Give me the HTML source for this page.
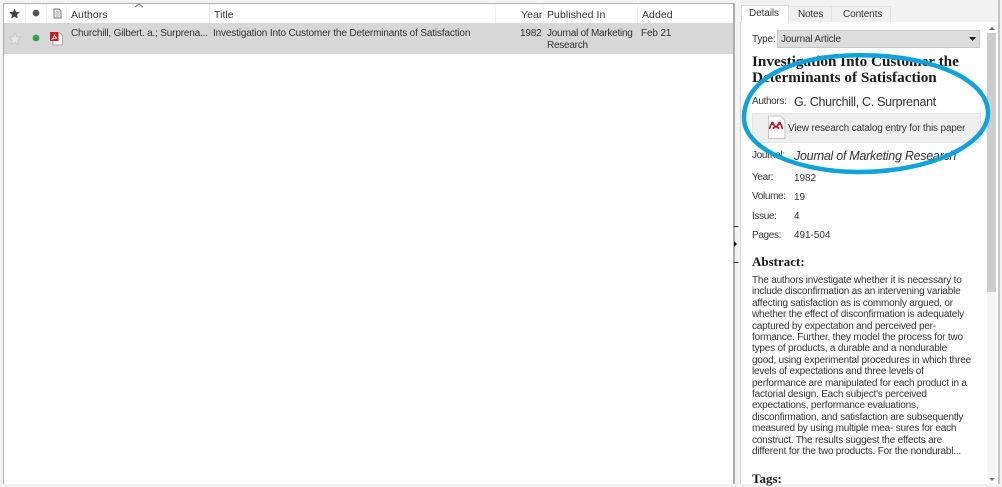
<!DOCTYPE html>
<html><head><meta charset="utf-8">
<style>
html,body{margin:0;padding:0}
body{width:1002px;height:484px;position:relative;overflow:hidden;background:#f2f2f2;font-family:"Liberation Sans",sans-serif;color:#222;font-size:10px}
#w{position:absolute;left:0;top:0;width:1002px;height:484px;filter:blur(.3px)}
.a{position:absolute;white-space:nowrap}
.h{font-size:10.5px;color:#333;top:9px;letter-spacing:.05px}
.c{font-size:10px;color:#333;line-height:11.5px;letter-spacing:-.17px}
.l{left:752px;font-size:10px;color:#333;letter-spacing:-.35px}
.v{left:794px;font-size:10px;color:#333;letter-spacing:-.05px}
</style></head><body><div id="w">
<!-- left list panel -->
<div class="a" style="left:3px;top:3px;width:732px;height:481px;background:#fff;border-left:1px solid #adadad;border-top:1px solid #b4b4b4;border-right:2px solid #adadad;box-sizing:border-box"></div>
<div class="a" style="left:4px;top:23px;width:729px;height:31px;background:#d7d7d7"></div>
<!-- header separators -->
<div class="a" style="left:25px;top:4px;width:1px;height:19px;background:#f0f0f0"></div>
<div class="a" style="left:46px;top:4px;width:1px;height:19px;background:#f0f0f0"></div>
<div class="a" style="left:66px;top:4px;width:1px;height:19px;background:#f0f0f0"></div>
<div class="a" style="left:209px;top:4px;width:1px;height:19px;background:#ececec"></div>
<div class="a" style="left:495px;top:4px;width:1px;height:19px;background:#f0f0f0"></div>
<div class="a" style="left:543px;top:4px;width:1px;height:19px;background:#f0f0f0"></div>
<div class="a" style="left:637px;top:4px;width:1px;height:19px;background:#f0f0f0"></div>
<!-- header icons -->
<svg class="a" style="left:0;top:0" width="150" height="54" viewBox="0 0 150 54">
<path d="M14.500 8.500l1.500 3.400 3.800.4-2.800 2.500.8 3.700-3.300-1.900-3.300 1.900.8-3.700-2.800-2.500 3.800-.4z" fill="#444"/>
<circle cx="36" cy="13" r="3.400" fill="#555"/>
<path d="M54 9h5l2 2v7h-7z" fill="#f4f4f4" stroke="#777" stroke-width="1"/>
<path d="M55.500 12h4M55.500 14h4M55.500 16h4" stroke="#888" stroke-width=".8"/>
<path d="M15 33l1.800 3.800 4.200.5-3.100 2.900.8 4.200-3.700-2.100-3.700 2.100.8-4.200-3.100-2.900 4.200-.5z" fill="#e4e4e4" stroke="#c8c8c8" stroke-width="1"/>
<circle cx="36" cy="38" r="3.400" fill="#2fa344"/>
<path d="M53 33h7l2.500 2.500v9.500h-9.500z" fill="#fff" stroke="#9a9a9a" stroke-width=".8"/>
<rect x="50" y="32" width="8.500" height="9" fill="#cc1c22"/>
<path d="M51.500 39.500q2.500-1.500 3-5q.5 3 2.500 3.500q-3 0-5.500 1.500z" fill="none" stroke="#fff" stroke-width=".8"/>
<path d="M135 7l4-3 4 3" fill="none" stroke="#777" stroke-width="1"/>
</svg>
<div class="a h" style="left:71px">Authors</div>
<div class="a h" style="left:214px">Title</div>
<div class="a h" style="left:521px">Year</div>
<div class="a h" style="left:547px">Published In</div>
<div class="a h" style="left:642px">Added</div>
<div class="a c" style="left:71px;top:28px">Churchill, Gilbert. a.; Surprena...</div>
<div class="a c" style="left:213px;top:28px;letter-spacing:-.15px">Investigation Into Customer the Determinants of Satisfaction</div>
<div class="a c" style="left:520px;top:28px">1982</div>
<div class="a c" style="left:547px;top:28px;letter-spacing:-.25px">Journal of Marketing<br>Research</div>
<div class="a c" style="left:641px;top:28px">Feb 21</div>
<!-- splitter -->
<div class="a" style="left:735px;top:0;width:5px;height:484px;background:#f4f4f4"></div>
<svg class="a" style="left:732px;top:220px" width="10" height="50"><path d="M1.500 6.500H6.500M1.500 42.500H6.500" stroke="#333" stroke-width="1"/><path d="M2 21l3 3-3 3z" fill="#111"/></svg>
<!-- right panel -->
<div class="a" style="left:740px;top:22px;width:258px;height:462px;background:#fff;border-left:1px solid #d4d4d4;box-sizing:border-box"></div>
<div class="a" style="left:998px;top:0;width:2px;height:484px;background:#c6c6c6"></div>
<div class="a" style="left:741px;top:5px;width:48px;height:18px;background:#fff;border:1px solid #dcdcdc;border-bottom:0;box-sizing:border-box"></div>
<div class="a" style="left:789px;top:6px;width:43px;height:16px;background:#f0f0f0;border:1px solid #e2e2e2;border-bottom:0;border-left:0;box-sizing:border-box"></div>
<div class="a" style="left:832px;top:6px;width:59px;height:16px;background:#f0f0f0;border:1px solid #e2e2e2;border-bottom:0;border-left:0;box-sizing:border-box"></div>
<div class="a" style="left:749px;top:8px;font-size:10px;color:#333;letter-spacing:-.1px">Details</div>
<div class="a" style="left:798px;top:9px;font-size:10px;color:#333;letter-spacing:-.2px">Notes</div>
<div class="a" style="left:843px;top:9px;font-size:10px;color:#333;letter-spacing:-.1px">Contents</div>
<!-- scrollbar -->
<div class="a" style="left:987px;top:33px;width:9px;height:442px;background:#f5f5f5"></div>
<div class="a" style="left:987px;top:33px;width:9px;height:259px;background:#cdcdcd"></div>
<svg class="a" style="left:987px;top:24px" width="10" height="8"><path d="M2 6l3-3 3 3z" fill="#666"/></svg>
<svg class="a" style="left:987px;top:475px" width="10" height="8"><path d="M2 3l3 3 3-3z" fill="#777"/></svg>
<!-- type -->
<div class="a l" style="top:34px;letter-spacing:-.2px">Type:</div>
<div class="a" style="left:777px;top:30px;width:203px;height:18px;background:#dcdcdc;border:1px solid #c8c8c8;box-sizing:border-box"></div>
<div class="a" style="left:781px;top:34px;font-size:10px;color:#333;letter-spacing:-.2px">Journal Article</div>
<svg class="a" style="left:968px;top:36px" width="10" height="6"><path d="M1 1h7l-3.500 4z" fill="#222"/></svg>
<!-- title -->
<div class="a" style="left:752px;top:54px;font-family:'Liberation Serif',serif;font-weight:bold;font-size:15.200px;line-height:16px;color:#1a1a1a">Investigation Into Customer the<br>Determinants of Satisfaction</div>
<div class="a l" style="top:96px">Authors:</div>
<div class="a" style="left:794px;top:95px;font-size:12.500px;color:#333;letter-spacing:-.3px">G. Churchill, C. Surprenant</div>
<!-- button -->
<div class="a" style="left:752px;top:113px;width:229px;height:30px;background:#efefef;border:1px solid #e6e6e6;box-sizing:border-box"></div>
<svg class="a" style="left:767px;top:114px" width="20" height="26"><path d="M1.500 2h12l4.500 4.500V24.500H1.500z" fill="#fbfbfb" stroke="#c6c6c6"/><path d="M2.500 15c1-3 1-5 3-5s2 3 3.500 3 1.500-3 3.500-3 2 2 3 5M6.500 15c0-2 1-2.500 2.500-2.500s2.500.5 2.500 2.500" fill="none" stroke="#b3202a" stroke-width="1.700"/><circle cx="5.500" cy="9.500" r="1.600" fill="#b3202a"/><circle cx="12.500" cy="9.500" r="1.600" fill="#b3202a"/></svg>
<div class="a" style="left:788px;top:123px;font-size:10px;color:#333;letter-spacing:-.17px">View research catalog entry for this paper</div>
<div class="a l" style="top:150px">Journal:</div>
<div class="a" style="left:794px;top:149px;font-size:12.500px;font-style:italic;color:#333;letter-spacing:-.28px">Journal of Marketing Research</div>
<div class="a l" style="top:172px">Year:</div><div class="a v" style="top:173px">1982</div>
<div class="a l" style="top:191px">Volume:</div><div class="a v" style="top:192px">19</div>
<div class="a l" style="top:211px">Issue:</div><div class="a v" style="top:211px">4</div>
<div class="a l" style="top:230px">Pages:</div><div class="a v" style="top:230px">491-504</div>
<div class="a" style="left:752px;top:254px;font-family:'Liberation Serif',serif;font-weight:bold;font-size:13px;color:#1a1a1a">Abstract:</div>
<div class="a" style="left:752px;top:275px;font-size:10px;line-height:11.400px;color:#333;letter-spacing:-.2px">The authors investigate whether it is necessary to<br>include disconfirmation as an intervening variable<br>affecting satisfaction as is commonly argued, or<br>whether the effect of disconfirmation is adequately<br>captured by expectation and perceived per-<br>formance. Further, they model the process for two<br>types of products, a durable and a nondurable<br>good, using experimental procedures in which three<br>levels of expectations and three levels of<br>performance are manipulated for each product in a<br>factorial design. Each subject's perceived<br>expectations, performance evaluations,<br>disconfirmation, and satisfaction are subsequently<br>measured by using multiple mea- sures for each<br>construct. The results suggest the effects are<br>different for the two products. For the nondurabl...</div>
<div class="a" style="left:752px;top:471px;font-family:'Liberation Serif',serif;font-weight:bold;font-size:13px;color:#1a1a1a">Tags:</div>
<!-- ellipse -->
<svg class="a" style="left:0;top:0" width="1002" height="484" viewBox="0 0 1002 484"><path d="M875 55.500C935 58 988 80 988 113C988 145 930 172 858 172C800 172 744 150 744 118C744 80 790 52 875 55.500Z" fill="none" stroke="#0ea3dc" stroke-width="4.500"/></svg>
</div></body></html>
